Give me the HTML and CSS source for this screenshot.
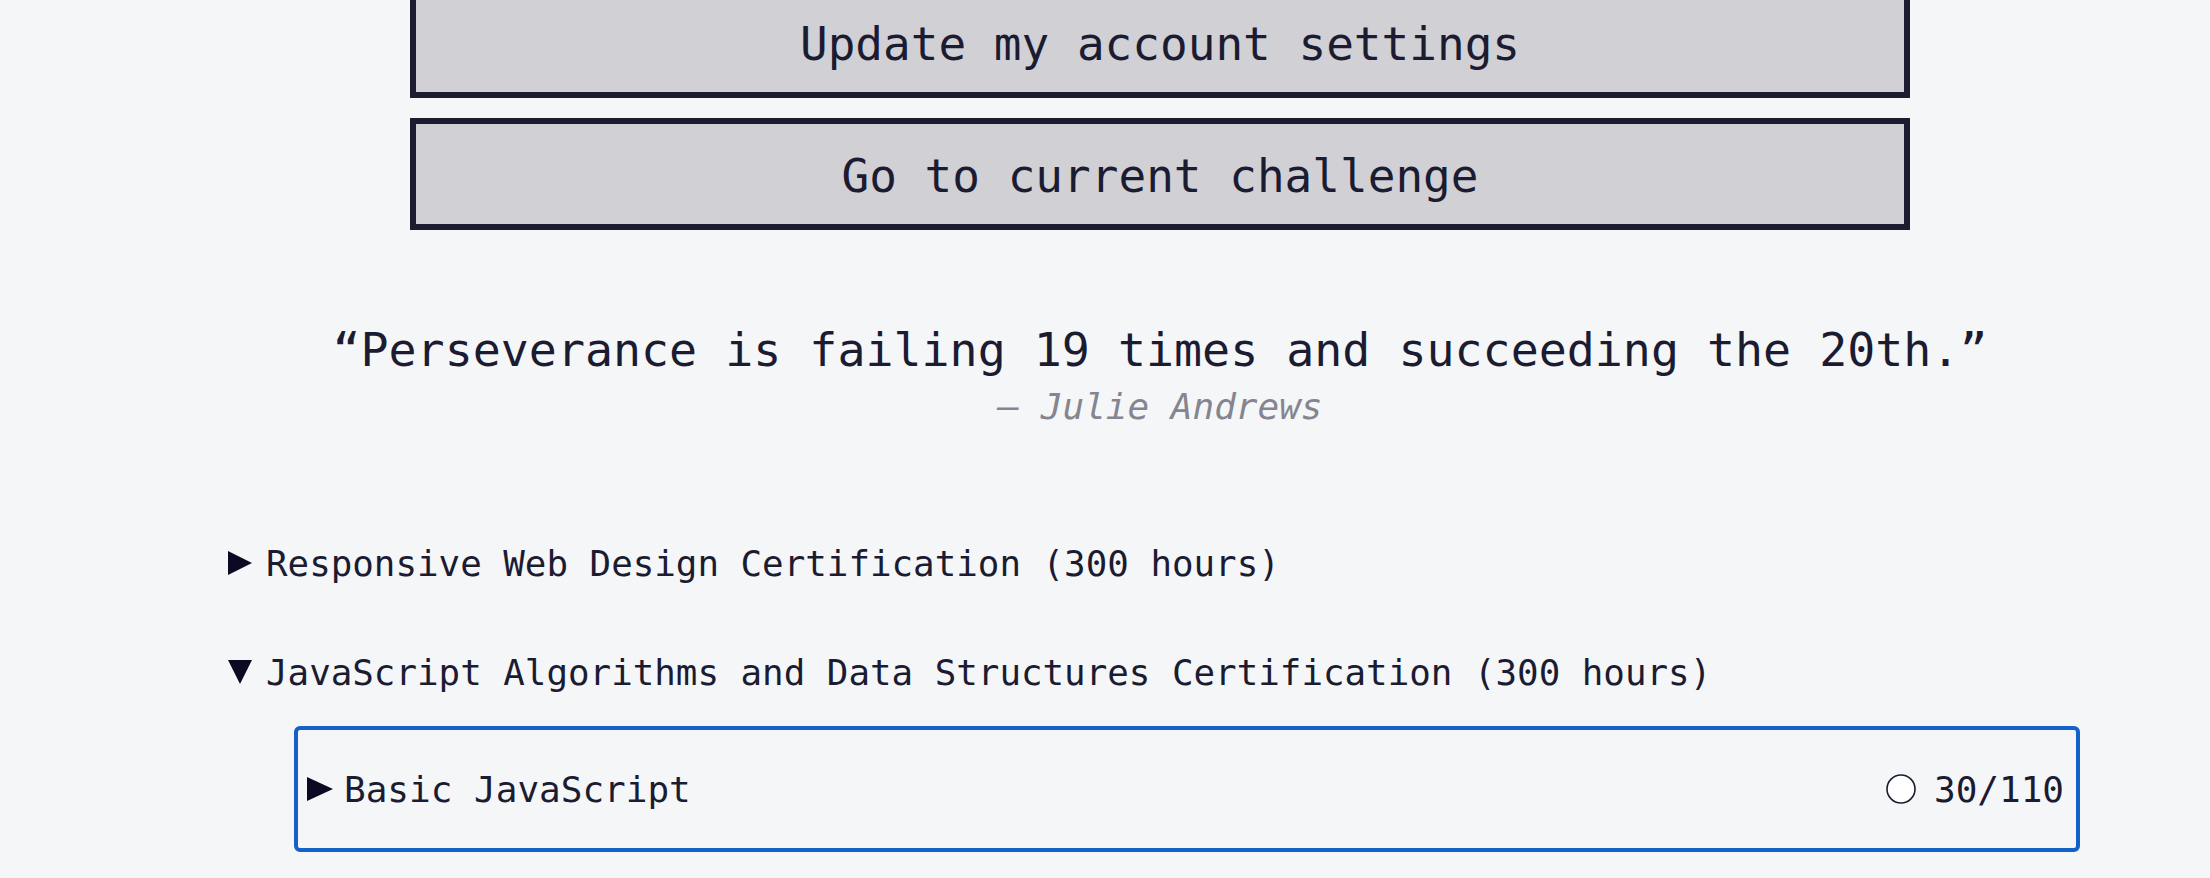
FILE: index.html
```html
<!DOCTYPE html>
<html lang="en">
<head>
<meta charset="utf-8">
<title>Learn</title>
<link rel="stylesheet" href="styles.css">
</head>
<body>
<main class="page">
  <div class="actions">
    <a class="btn btn-first" href="#">Update my account settings</a>
    <a class="btn" href="#">Go to current challenge</a>
  </div>

  <blockquote class="quote">
    <p class="quote-text">“Perseverance is failing 19 times and succeeding the 20th.”</p>
    <p class="quote-author">— Julie Andrews</p>
  </blockquote>

  <ul class="certs">
    <li class="cert">
      <div class="cert-head">
        <svg class="tri" width="24" height="24" viewBox="0 0 24 24"><polygon points="0,0 24,12 0,24"/></svg>
        <span>Responsive Web Design Certification (300 hours)</span>
      </div>
    </li>
    <li class="cert">
      <div class="cert-head">
        <svg class="tri" width="24" height="24" viewBox="0 0 24 24"><polygon points="0,0 24,0 12,24"/></svg>
        <span>JavaScript Algorithms and Data Structures Certification (300 hours)</span>
      </div>
      <div class="block">
        <div class="block-left">
          <svg class="tri tri-sm" width="26" height="24" viewBox="0 0 26 24"><polygon points="0,0 26,12 0,24"/></svg>
          <span>Basic JavaScript</span>
        </div>
        <div class="block-right">
          <svg class="ring" width="30" height="30" viewBox="0 0 30 30"><circle cx="15" cy="15" r="14" /></svg>
          <span>30/110</span>
        </div>
      </div>
    </li>
  </ul>
</main>
</body>
</html>
```

FILE: styles.css
```css
html, body {
  margin: 0;
  padding: 0;
  background: #f5f6f7;
  color: #1b1b32;
  font-family: "DejaVu Sans Mono", "Liberation Mono", monospace;
  overflow: hidden;
}

.page {
  margin-left: 228px;
  width: 1864px;
}

.actions {
  display: flex;
  flex-direction: column;
  align-items: center;
  gap: 20px;
  margin-top: -14px;
}

.btn {
  box-sizing: border-box;
  width: 1500px;
  height: 112px;
  display: flex;
  align-items: center;
  justify-content: center;
  background: #d0d0d5;
  border: 6px solid #1b1b32;
  color: #1b1b32;
  text-decoration: none;
  font-size: 46px;
  padding-top: 4px;
}

.quote {
  margin: 93px 0 0 0;
  text-align: center;
}

.quote-text {
  margin: 0;
  font-size: 46.6px;
  line-height: 55px;
}

.quote-author {
  margin: 7px 0 0 0;
  font-size: 36px;
  line-height: 43px;
  font-style: italic;
  color: #858591;
}

.certs {
  list-style: none;
  margin: 105px 0 0 0;
  padding: 0;
}

.cert-head {
  height: 60px;
  display: flex;
  align-items: center;
  gap: 14px;
  font-size: 35.85px;
}

.cert + .cert {
  margin-top: 49px;
}

.tri {
  fill: #0a0a23;
  flex: none;
}

.block {
  box-sizing: border-box;
  margin: 24px 0 0 66px;
  width: 1786px;
  height: 126px;
  border: 4px solid #1262c8;
  border-radius: 6px;
  display: flex;
  align-items: center;
  justify-content: space-between;
  padding: 0 12px 0 9px;
  font-size: 36px;
}

.block-left,
.block-right {
  display: flex;
  align-items: center;
}

.block-left {
  gap: 11px;
}

.block-right {
  gap: 18px;
}

.ring {
  flex: none;
}

.ring circle {
  fill: #ffffff;
  stroke: #1b1b32;
  stroke-width: 1.6;
}
```
